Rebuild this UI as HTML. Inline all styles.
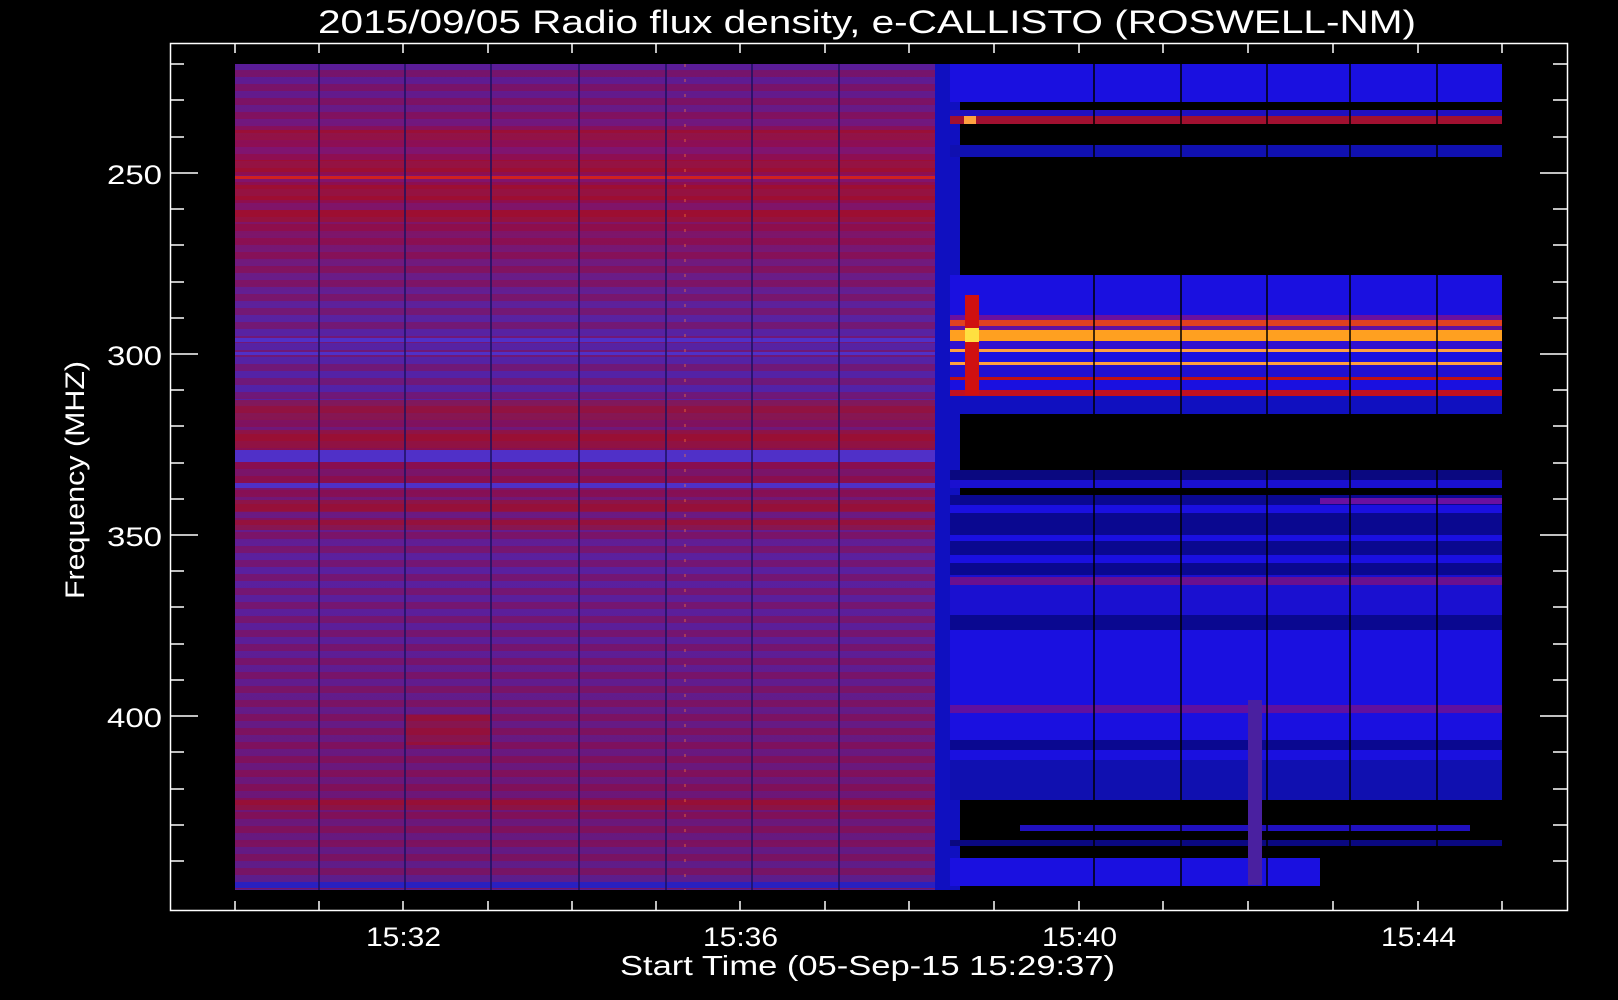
<!DOCTYPE html>
<html><head><meta charset="utf-8"><style>
html,body{margin:0;padding:0;background:#000;width:1618px;height:1000px;overflow:hidden}
svg{display:block}
text{font-family:"Liberation Sans",sans-serif;fill:#fff}
</style></head><body>
<svg width="1618" height="1000" viewBox="0 0 1618 1000" xmlns="http://www.w3.org/2000/svg">
<defs>
<linearGradient id="lg" x1="0" y1="0" x2="0" y2="1">
<stop offset="0" stop-color="#5a1c98"/>
<stop offset="0.05" stop-color="#661a88"/>
<stop offset="0.1" stop-color="#801470"/>
<stop offset="0.2" stop-color="#801466"/>
<stop offset="0.3" stop-color="#5a22a0"/>
<stop offset="0.4" stop-color="#5222a8"/>
<stop offset="0.45" stop-color="#761570"/>
<stop offset="0.5" stop-color="#7a1468"/>
<stop offset="0.6" stop-color="#5a20a0"/>
<stop offset="0.7" stop-color="#5c1e98"/>
<stop offset="0.8" stop-color="#661a84"/>
<stop offset="0.9" stop-color="#6e1676"/>
<stop offset="1" stop-color="#5a1e90"/>
</linearGradient>
<pattern id="stripes" width="36" height="14" patternUnits="userSpaceOnUse">
<rect width="36" height="7" fill="#b00010" opacity="0.3"/>
</pattern>
</defs>
<rect x="235" y="64" width="700" height="826" fill="url(#lg)"/>
<rect x="235" y="64" width="700" height="826" fill="url(#stripes)"/>
<g fill="#b01010" opacity="0.45">
<rect x="235" y="130" width="700" height="10"/><rect x="235" y="160" width="700" height="12"/>
<rect x="235" y="185" width="700" height="15"/><rect x="235" y="210" width="700" height="12"/>
<rect x="235" y="400" width="700" height="20"/><rect x="235" y="430" width="700" height="18"/>
<rect x="235" y="500" width="700" height="12"/><rect x="235" y="520" width="700" height="10"/>
<rect x="405" y="715" width="85" height="30"/><rect x="235" y="800" width="700" height="10"/>
</g>
<g fill="#5030c8">
<rect x="235" y="338" width="700" height="4"/><rect x="235" y="352" width="700" height="3"/>
<rect x="235" y="450" width="700" height="12"/><rect x="235" y="483" width="700" height="5"/>
<rect x="235" y="176" width="700" height="3" fill="#d02020"/>
</g>
<rect x="235" y="882" width="700" height="6" fill="#2a20c0"/>
<g stroke="#1a1060" stroke-width="1.5">
<line x1="319" y1="64" x2="319" y2="890"/><line x1="405" y1="64" x2="405" y2="890"/>
<line x1="491" y1="64" x2="491" y2="890"/><line x1="579" y1="64" x2="579" y2="890"/>
<line x1="666" y1="64" x2="666" y2="890"/><line x1="752" y1="64" x2="752" y2="890"/>
<line x1="839" y1="64" x2="839" y2="890"/>
</g>
<line x1="685" y1="64" x2="685" y2="890" stroke="#ff8030" stroke-width="1" stroke-dasharray="3 12" opacity="0.7"/>
<rect x="935" y="64" width="30" height="826" fill="#1010c0"/>
<rect x="960" y="64" width="542" height="826" fill="#000"/>
<g>
<rect x="950" y="64" width="552" height="38" fill="#1a10e0"/>
<rect x="950" y="110" width="552" height="6" fill="#2010c0"/>
<rect x="950" y="116" width="552" height="8" fill="#a01030"/>
<rect x="964" y="116" width="12" height="8" fill="#ffa040"/>
<rect x="950" y="145" width="552" height="12" fill="#1010b0"/>
<rect x="950" y="275" width="552" height="40" fill="#1a10e0"/>
<rect x="950" y="315" width="552" height="10" fill="#6a10a0"/>
<rect x="950" y="320" width="552" height="6" fill="#e04020"/>
<rect x="950" y="326" width="552" height="4" fill="#6010a0"/>
<rect x="950" y="330" width="552" height="11" fill="#ffa020"/>
<rect x="950" y="341" width="552" height="8" fill="#3010d0"/>
<rect x="950" y="349" width="552" height="3" fill="#ffa040"/>
<rect x="950" y="352" width="552" height="10" fill="#1a10e0"/>
<rect x="950" y="362" width="552" height="3" fill="#ffa040"/>
<rect x="950" y="365" width="552" height="12" fill="#2010d0"/>
<rect x="950" y="377" width="552" height="3" fill="#c01010"/>
<rect x="950" y="380" width="552" height="10" fill="#1a10e0"/>
<rect x="950" y="390" width="552" height="6" fill="#c01020"/>
<rect x="950" y="396" width="552" height="18" fill="#1010c0"/>
<rect x="965" y="295" width="14" height="100" fill="#d01010"/>
<rect x="965" y="328" width="14" height="14" fill="#ffe040"/>
<rect x="950" y="470" width="552" height="10" fill="#0a0880"/>
<rect x="950" y="480" width="552" height="8" fill="#1a10d0"/>
<rect x="950" y="495" width="552" height="80" fill="#0a0890"/>
<rect x="950" y="505" width="552" height="8" fill="#1a10e0"/>
<rect x="1320" y="498" width="182" height="6" fill="#6a10a0"/>
<rect x="950" y="535" width="552" height="6" fill="#1a10e0"/>
<rect x="950" y="555" width="552" height="8" fill="#1a10e0"/>
<rect x="950" y="575" width="552" height="40" fill="#1a10d0"/>
<rect x="950" y="577" width="552" height="8" fill="#6a1090"/>
<rect x="950" y="615" width="552" height="15" fill="#0a0890"/>
<rect x="950" y="630" width="552" height="160" fill="#1a10e0"/>
<rect x="950" y="705" width="552" height="8" fill="#6010a0"/>
<rect x="950" y="740" width="552" height="10" fill="#0a0890"/>
<rect x="950" y="760" width="552" height="40" fill="#1010b0"/>
<rect x="1020" y="825" width="450" height="6" fill="#2010c0"/>
<rect x="950" y="840" width="552" height="6" fill="#0a0880"/>
<rect x="950" y="858" width="370" height="28" fill="#1a10e0"/>
<rect x="1248" y="700" width="14" height="185" fill="#4a20a0"/>
</g>
<g stroke="#000" stroke-width="1.5">
<line x1="1094" y1="64" x2="1094" y2="890"/><line x1="1181" y1="64" x2="1181" y2="890"/>
<line x1="1267" y1="64" x2="1267" y2="890"/><line x1="1350" y1="64" x2="1350" y2="890"/>
<line x1="1437" y1="64" x2="1437" y2="890"/>
</g>
<rect x="170.5" y="43.5" width="1397" height="867" fill="none" stroke="#fff" stroke-width="1.5"/>
<g stroke="#fff" stroke-width="1.5">
<line x1="170" y1="64" x2="184" y2="64"/><line x1="1553" y1="64" x2="1568" y2="64"/>
<line x1="170" y1="100" x2="184" y2="100"/><line x1="1553" y1="100" x2="1568" y2="100"/>
<line x1="170" y1="137" x2="184" y2="137"/><line x1="1553" y1="137" x2="1568" y2="137"/>
<line x1="170" y1="173" x2="198" y2="173"/><line x1="1540" y1="173" x2="1568" y2="173"/>
<line x1="170" y1="209" x2="184" y2="209"/><line x1="1553" y1="209" x2="1568" y2="209"/>
<line x1="170" y1="245" x2="184" y2="245"/><line x1="1553" y1="245" x2="1568" y2="245"/>
<line x1="170" y1="282" x2="184" y2="282"/><line x1="1553" y1="282" x2="1568" y2="282"/>
<line x1="170" y1="318" x2="184" y2="318"/><line x1="1553" y1="318" x2="1568" y2="318"/>
<line x1="170" y1="354" x2="198" y2="354"/><line x1="1540" y1="354" x2="1568" y2="354"/>
<line x1="170" y1="390" x2="184" y2="390"/><line x1="1553" y1="390" x2="1568" y2="390"/>
<line x1="170" y1="426" x2="184" y2="426"/><line x1="1553" y1="426" x2="1568" y2="426"/>
<line x1="170" y1="463" x2="184" y2="463"/><line x1="1553" y1="463" x2="1568" y2="463"/>
<line x1="170" y1="499" x2="184" y2="499"/><line x1="1553" y1="499" x2="1568" y2="499"/>
<line x1="170" y1="535" x2="198" y2="535"/><line x1="1540" y1="535" x2="1568" y2="535"/>
<line x1="170" y1="571" x2="184" y2="571"/><line x1="1553" y1="571" x2="1568" y2="571"/>
<line x1="170" y1="607" x2="184" y2="607"/><line x1="1553" y1="607" x2="1568" y2="607"/>
<line x1="170" y1="644" x2="184" y2="644"/><line x1="1553" y1="644" x2="1568" y2="644"/>
<line x1="170" y1="680" x2="184" y2="680"/><line x1="1553" y1="680" x2="1568" y2="680"/>
<line x1="170" y1="716" x2="198" y2="716"/><line x1="1540" y1="716" x2="1568" y2="716"/>
<line x1="170" y1="752" x2="184" y2="752"/><line x1="1553" y1="752" x2="1568" y2="752"/>
<line x1="170" y1="789" x2="184" y2="789"/><line x1="1553" y1="789" x2="1568" y2="789"/>
<line x1="170" y1="825" x2="184" y2="825"/><line x1="1553" y1="825" x2="1568" y2="825"/>
<line x1="170" y1="861" x2="184" y2="861"/><line x1="1553" y1="861" x2="1568" y2="861"/>
<line x1="235" y1="43" x2="235" y2="53"/><line x1="235" y1="901" x2="235" y2="911"/>
<line x1="319" y1="43" x2="319" y2="53"/><line x1="319" y1="901" x2="319" y2="911"/>
<line x1="403" y1="43" x2="403" y2="53"/><line x1="403" y1="901" x2="403" y2="911"/>
<line x1="488" y1="43" x2="488" y2="53"/><line x1="488" y1="901" x2="488" y2="911"/>
<line x1="572" y1="43" x2="572" y2="53"/><line x1="572" y1="901" x2="572" y2="911"/>
<line x1="656" y1="43" x2="656" y2="53"/><line x1="656" y1="901" x2="656" y2="911"/>
<line x1="740" y1="43" x2="740" y2="53"/><line x1="740" y1="901" x2="740" y2="911"/>
<line x1="825" y1="43" x2="825" y2="53"/><line x1="825" y1="901" x2="825" y2="911"/>
<line x1="909" y1="43" x2="909" y2="53"/><line x1="909" y1="901" x2="909" y2="911"/>
<line x1="994" y1="43" x2="994" y2="53"/><line x1="994" y1="901" x2="994" y2="911"/>
<line x1="1079" y1="43" x2="1079" y2="53"/><line x1="1079" y1="901" x2="1079" y2="911"/>
<line x1="1163" y1="43" x2="1163" y2="53"/><line x1="1163" y1="901" x2="1163" y2="911"/>
<line x1="1248" y1="43" x2="1248" y2="53"/><line x1="1248" y1="901" x2="1248" y2="911"/>
<line x1="1333" y1="43" x2="1333" y2="53"/><line x1="1333" y1="901" x2="1333" y2="911"/>
<line x1="1418" y1="43" x2="1418" y2="53"/><line x1="1418" y1="901" x2="1418" y2="911"/>
<line x1="1502" y1="43" x2="1502" y2="53"/><line x1="1502" y1="901" x2="1502" y2="911"/>
</g>
<text x="318" y="33" font-size="32" textLength="1098" lengthAdjust="spacingAndGlyphs">2015/09/05  Radio flux density, e-CALLISTO (ROSWELL-NM)</text>
<g font-size="27">
<text x="107" y="184" textLength="55" lengthAdjust="spacingAndGlyphs">250</text>
<text x="107" y="365" textLength="55" lengthAdjust="spacingAndGlyphs">300</text>
<text x="107" y="546" textLength="55" lengthAdjust="spacingAndGlyphs">350</text>
<text x="107" y="727" textLength="55" lengthAdjust="spacingAndGlyphs">400</text>
<text x="366" y="946" textLength="75" lengthAdjust="spacingAndGlyphs">15:32</text>
<text x="703" y="946" textLength="75" lengthAdjust="spacingAndGlyphs">15:36</text>
<text x="1042" y="946" textLength="75" lengthAdjust="spacingAndGlyphs">15:40</text>
<text x="1381" y="946" textLength="75" lengthAdjust="spacingAndGlyphs">15:44</text>
</g>
<text x="620" y="975" font-size="28" textLength="495" lengthAdjust="spacingAndGlyphs">Start Time (05-Sep-15 15:29:37)</text>
<text transform="translate(84,599) rotate(-90)" font-size="27" textLength="238" lengthAdjust="spacingAndGlyphs">Frequency (MHZ)</text>
</svg>
</body></html>
